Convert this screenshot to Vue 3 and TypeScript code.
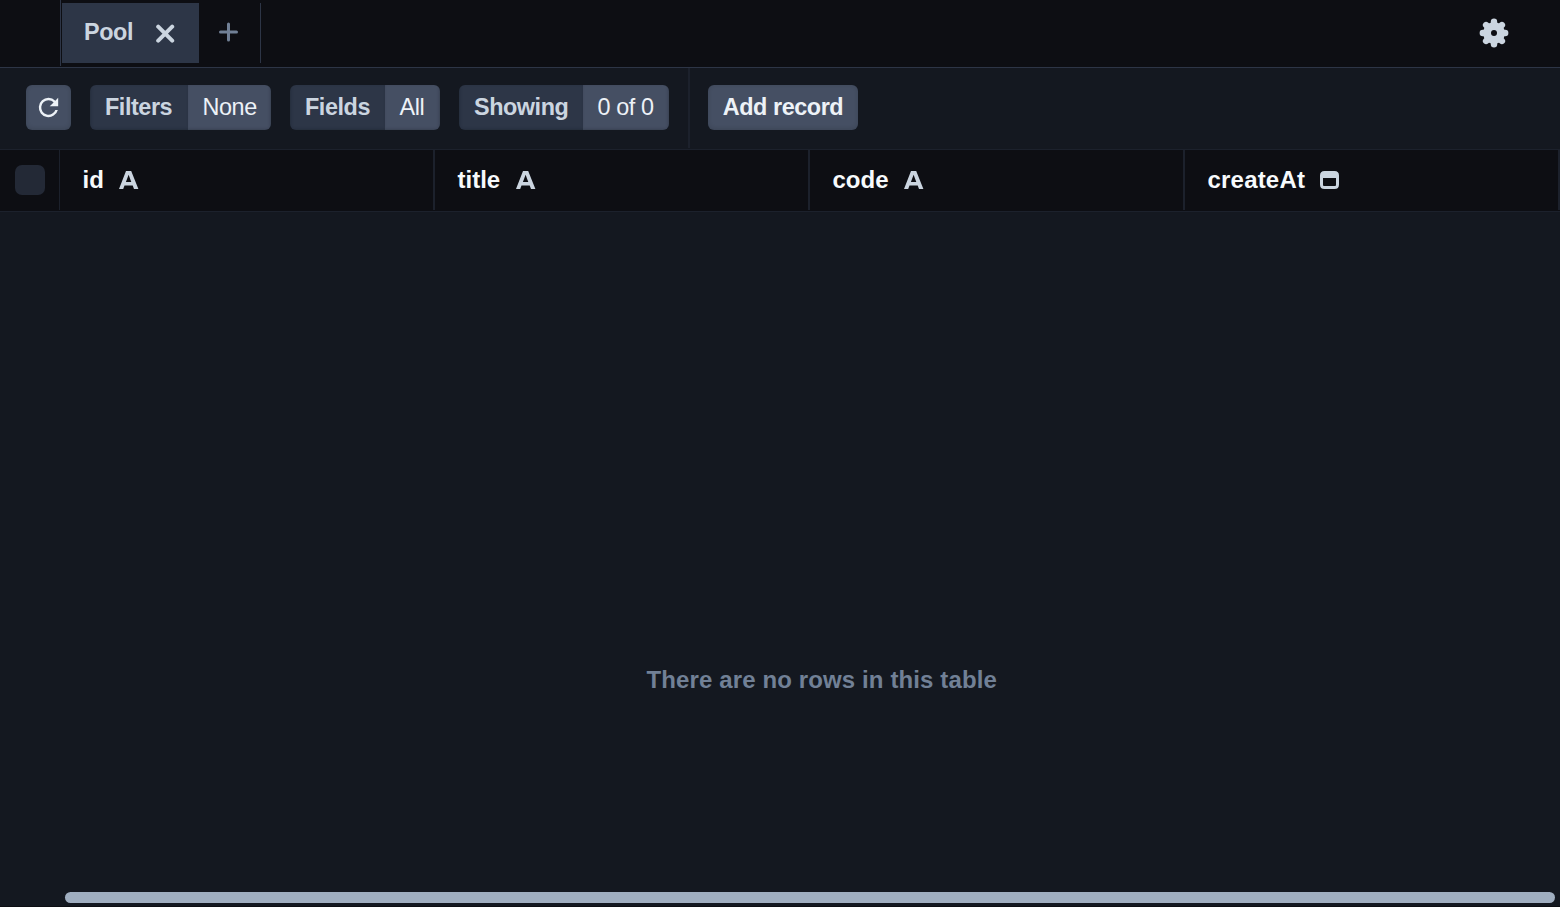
<script setup lang="ts">
interface Segment {
  key: string
  label: string
  value: string
  labelWidth: number
  width: number
}

interface Column {
  name: string
  kind: 'text' | 'date'
  nameWidth: number
}

const segments: Segment[] = [
  { key: 'filters', label: 'Filters', value: 'None', labelWidth: 98, width: 181 },
  { key: 'fields', label: 'Fields', value: 'All', labelWidth: 95, width: 150 },
  { key: 'showing', label: 'Showing', value: '0 of 0', labelWidth: 124, width: 210 },
]

const columns: Column[] = [
  { name: 'id', kind: 'text', nameWidth: 36 },
  { name: 'title', kind: 'text', nameWidth: 58 },
  { name: 'code', kind: 'text', nameWidth: 71 },
  { name: 'createAt', kind: 'date', nameWidth: 112 },
]

const petals = [0, 45, 90, 135, 180, 225, 270, 315]
</script>

<template>
  <div class="studio">
    <header class="tabs">
      <div class="gutter"></div>
      <div class="tab">
        <span class="tab-name">Pool</span>
        <svg class="close" width="20" height="20" viewBox="0 0 20 20">
          <path d="M3.2 2.7L17.2 16.7M17.2 2.7L3.2 16.7" />
        </svg>
      </div>
      <div class="new-tab">
        <svg class="plus" width="20" height="20" viewBox="0 0 20 20">
          <path d="M9.5 2V18M1.5 10H17.5" />
        </svg>
      </div>
      <svg class="gear" width="30" height="30" viewBox="-15 -15 30 30">
        <mask id="gear-hole">
          <rect x="-15" y="-15" width="30" height="30" fill="#fff" />
          <circle r="3" fill="#000" />
        </mask>
        <g mask="url(#gear-hole)">
          <circle r="10.8" />
          <rect
            v-for="a in petals"
            :key="a"
            x="-3.2"
            y="-14.4"
            width="6.4"
            height="10"
            rx="3.2"
            :transform="`rotate(${a})`"
          />
        </g>
      </svg>
    </header>

    <section class="toolbar">
      <button class="btn refresh" aria-label="Refresh">
        <svg width="29" height="29" viewBox="0 0 24 24">
          <path
            d="M17.65 6.35A7.96 7.96 0 0 0 12 4a8 8 0 1 0 7.73 10h-2.08A6 6 0 1 1 12 6c1.66 0 3.14.69 4.22 1.78L13 11h7V4z"
          />
        </svg>
      </button>
      <div v-for="s in segments" :key="s.key" class="segment" :style="{ width: s.width + 'px' }">
        <span class="seg-label" :style="{ width: s.labelWidth + 'px' }">{{ s.label }}</span>
        <span class="seg-value">{{ s.value }}</span>
      </div>
      <div class="divider"></div>
      <button class="btn add">Add record</button>
    </section>

    <div class="head">
      <div class="check-cell"><span class="check"></span></div>
      <div v-for="c in columns" :key="c.name" class="col">
        <span class="col-name" :class="c.kind" :style="{ width: c.nameWidth + 'px' }">{{ c.name }}</span>
        <svg v-if="c.kind === 'text'" class="kind" width="20" height="20" viewBox="0 0 20 20">
          <path
            fill-rule="evenodd"
            d="M7 1H12.2L19.4 19H15L13.7 15.6H5.5L4.2 19H0zM6.9 12.1H12.3L9.6 4.8z"
          />
        </svg>
        <svg v-else class="kind calendar" width="20" height="20" viewBox="0 0 20 20">
          <path
            fill-rule="evenodd"
            d="M4.5 1H14.5Q19 1 19 5.5V14.5Q19 19 14.5 19H4.5Q0 19 0 14.5V5.5Q0 1 4.5 1zM3 8V15Q3 16 4 16H15Q16 16 16 15V8z"
          />
        </svg>
      </div>
    </div>

    <main class="body">
      <p class="empty">There are no rows in this table</p>
      <div class="scroll"></div>
    </main>
  </div>
</template>

<style>
body {
  margin: 0;
  background: #141820;
}
</style>

<style scoped>
.studio {
  width: 1560px;
  height: 907px;
  display: flex;
  flex-direction: column;
  overflow: hidden;
  background: #141820;
  font-family: "Liberation Sans", Arial, sans-serif;
  font-size: 23.4px;
}
.studio * {
  box-sizing: border-box;
}
svg {
  display: block;
  flex: none;
}
.tabs {
  height: 68px;
  flex: none;
  display: flex;
  align-items: flex-start;
  background: #0d0e13;
  border-bottom: 1px solid #2d3546;
}
.gutter {
  width: 61px;
  height: 66px;
  border-right: 1px solid #2d3546;
}
.tab {
  width: 137px;
  height: 60px;
  margin: 3px 0 0 1px;
  padding-left: 22px;
  display: flex;
  align-items: center;
  background: #2d3647;
  color: #cbd5e0;
  font-weight: 700;
}
.tab-name {
  width: 71px;
  line-height: 26px;
  margin-top: -2px;
  letter-spacing: -0.4px;
}
.close {
  margin-top: 1px;
}
.close path {
  fill: none;
  stroke: #cbd5e0;
  stroke-width: 4;
  stroke-linecap: round;
}
.new-tab {
  width: 62px;
  height: 60px;
  margin-top: 3px;
  padding: 19px 0 0 20px;
  border-right: 1px solid #2d3546;
}
.plus path {
  stroke: #718096;
  stroke-width: 3;
  stroke-linecap: round;
}
.gear {
  margin: 18px 51px 0 auto;
  fill: #cbd5e0;
}
.toolbar {
  height: 82px;
  flex: none;
  display: flex;
  align-items: flex-start;
  gap: 19px;
  padding: 0 26px;
  border-bottom: 1px solid #1c212c;
}
.btn {
  height: 45px;
  margin: 17px 0 0;
  padding: 0;
  border: 0;
  border-radius: 6px;
  background: #454f63;
  color: #edf2f7;
  font: 700 23.4px/44px "Liberation Sans", Arial, sans-serif;
  letter-spacing: -0.44px;
  box-shadow: inset 0 -1px 4px rgba(20, 24, 32, 0.2);
}
.refresh {
  width: 45px;
  display: flex;
  align-items: center;
  justify-content: center;
  fill: #edf2f7;
}
.add {
  width: 150px;
  margin-left: -1px;
  padding-bottom: 1px;
}
.segment {
  height: 45px;
  margin-top: 17px;
  display: flex;
  overflow: hidden;
  border-radius: 6px;
  line-height: 44px;
}
.seg-label {
  flex: none;
  padding-left: 15px;
  background: #2d3647;
  color: #cbd5e0;
  font-weight: 700;
  letter-spacing: -0.44px;
  box-shadow: inset 2px 0 3px -1px rgba(20, 24, 32, 0.2), inset 0 -2px 3px -1px rgba(20, 24, 32, 0.2);
}
.seg-value {
  flex: 1;
  padding-left: 14.5px;
  background: #454f63;
  color: #edf2f7;
  letter-spacing: -0.4px;
  white-space: nowrap;
  box-shadow: inset -2px 0 3px -1px rgba(20, 24, 32, 0.2), inset 0 -2px 3px -1px rgba(20, 24, 32, 0.2);
}
.divider {
  width: 2px;
  height: 80px;
  background: #1c212c;
}
.head {
  height: 62px;
  flex: none;
  display: flex;
  background: #0d0e13;
  border-bottom: 1px solid #1c212c;
}
.check-cell {
  width: 60px;
  height: 60px;
  padding: 15px;
  border-right: 1px solid #1c212c;
}
.check {
  display: block;
  width: 30px;
  height: 30px;
  border-radius: 7px;
  background: #232936;
}
.col {
  width: 375px;
  height: 60px;
  padding-left: 22.5px;
  display: flex;
  align-items: center;
  border-right: 2px solid #1c212c;
}
.col-name {
  color: #f7fafc;
  font-size: 24px;
  font-weight: 700;
  line-height: 28px;
}
.col-name.date {
  letter-spacing: 0.2px;
}
.kind {
  fill: #cbd5e0;
}
.body {
  flex: 1;
  display: flex;
  flex-direction: column;
  justify-content: space-between;
  border-bottom: 1px solid #0d0e13;
}
.empty {
  margin: 454px 0 0 646.5px;
  color: #718096;
  font-size: 24px;
  font-weight: 700;
  line-height: 28px;
  letter-spacing: 0.12px;
  white-space: nowrap;
}
.scroll {
  height: 11px;
  margin: 0 5px 3px 65px;
  border-radius: 5.5px;
  background: #a0aec0;
}
</style>
